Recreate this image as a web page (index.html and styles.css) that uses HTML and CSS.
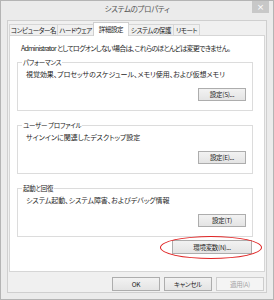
FILE: index.html
```html
<!DOCTYPE html>
<html lang="ja">
<head>
<meta charset="utf-8">
<link rel="stylesheet" href="styles.css">
</head>
<body>
<div class="window">
  <div class="titlebar">
    <span class="title">システムのプロパティ</span>
    <span class="close">×</span>
  </div>
  <div class="client">
    <div class="tabs">
      <span class="tab t1">コンピューター名</span>
      <span class="tab t2">ハードウェア</span>
      <span class="tab t3 active">詳細設定</span>
      <span class="tab t4">システムの保護</span>
      <span class="tab t5">リモート</span>
    </div>
    <div class="panel">
      <p class="info">Administrator としてログオンしない場合は、これらのほとんどは変更できません。</p>
      <fieldset class="group">
        <legend>パフォーマンス</legend>
        <p class="desc">視覚効果、プロセッサのスケジュール、メモリ使用、および仮想メモリ</p>
        <div class="row"><button class="btn">設定(S)...</button></div>
      </fieldset>
      <fieldset class="group">
        <legend>ユーザー プロファイル</legend>
        <p class="desc">サインインに関連したデスクトップ設定</p>
        <div class="row"><button class="btn">設定(E)...</button></div>
      </fieldset>
      <fieldset class="group last">
        <legend>起動と回復</legend>
        <p class="desc">システム起動、システム障害、およびデバッグ情報</p>
        <div class="row"><button class="btn">設定(T)</button></div>
      </fieldset>
      <div class="envrow">
        <div class="envwrap">
          <button class="btn env">環境変数(N)...</button>
          <span class="ring"></span>
        </div>
      </div>
    </div>
    <div class="footer">
      <button class="btn foot">OK</button>
      <button class="btn foot">キャンセル</button>
      <button class="btn foot disabled">適用(A)</button>
    </div>
  </div>
</div>
</body>
</html>
```
FILE: styles.css
```css
* { box-sizing: border-box; }
html, body { margin: 0; padding: 0; }
body {
  width: 274px;
  height: 300px;
  font-family: "Noto Sans CJK JP", "Noto Sans", sans-serif;
  font-feature-settings: "palt";
  color: #1e1e1e;
  background: #ffffff;
}
.window {
  width: 274px;
  height: 300px;
  background: #ebebeb;
  border: 1px solid #b4b4b4;
  display: flex;
  flex-direction: column;
}
.titlebar {
  height: 19px;
  position: relative;
  display: flex;
  justify-content: center;
  align-items: flex-start;
}
.title {
  font-size: 7.5px;
  line-height: 15px;
  color: #555;
  letter-spacing: -0.3px;
}
.close {
  position: absolute;
  right: 4px;
  top: 0;
  width: 17px;
  height: 12px;
  background: #c8c8c8;
  color: #fff;
  font-family: "DejaVu Sans", sans-serif;
  font-size: 9px;
  line-height: 12px;
  text-align: center;
}
.client {
  flex: 1;
  margin: 0 6px 6px 6px;
  background: #f0f0f0;
  border: 1px solid #cfcfcf;
  padding: 1px 1px 0 1px;
  display: flex;
  flex-direction: column;
}
.tabs {
  display: flex;
  align-items: flex-end;
  height: 13px;
  position: relative;
  z-index: 1;
}
.tab {
  height: 11px;
  border: 1px solid #d6d6d6;
  border-bottom: none;
  margin-right: -1px;
  background: #f0f0f0;
  font-size: 6.5px;
  line-height: 10px;
  text-align: center;
  letter-spacing: -0.4px;
  color: #222;
  white-space: nowrap;
}
.t1 { width: 49px; }
.t2 { width: 37px; }
.t3 { width: 36px; }
.t4 { width: 46px; }
.t5 { width: 27px; }
.tab.active {
  height: 14px;
  margin-bottom: -1px;
  background: #fff;
  line-height: 12px;
  border-color: #cfcfcf;
}
.panel {
  height: 237px;
  background: #fff;
  border: 1px solid #d6d6d6;
  padding: 7px 11px 0 7px;
}
.info {
  margin: 0 0 5px 4px;
  font-size: 7px;
  line-height: 10px;
  letter-spacing: -0.75px;
  white-space: nowrap;
}
.group {
  margin: 0 0 10px 0;
  padding: 4px 6px 7px 8px;
  border: 1px solid #dcdcdc;
  height: 53px;
}
.group.last { margin-bottom: 3px; }
.group legend {
  font-size: 6.5px;
  line-height: 8px;
  padding: 0 1px;
  margin-left: -4px;
  letter-spacing: -0.3px;
  color: #222;
}
.desc {
  margin: 0;
  font-size: 7px;
  line-height: 9px;
  letter-spacing: -0.05px;
  white-space: nowrap;
}
.row {
  display: flex;
  justify-content: flex-end;
  margin-top: 9px;
}
.btn {
  font-family: "Noto Sans CJK JP", "Noto Sans", sans-serif;
  font-feature-settings: "palt";
  width: 48px;
  height: 13px;
  padding: 0;
  border: 1px solid #adadad;
  background: linear-gradient(#f2f2f2, #e4e4e4);
  font-size: 6.5px;
  line-height: 11px;
  color: #222;
  letter-spacing: -0.3px;
}
.envrow {
  display: flex;
  justify-content: flex-end;
  margin-top: 2px;
}
.envwrap {
  position: relative;
  margin-right: 1px;
}
.btn.env {
  width: 80px;
  height: 14px;
  display: block;
}
.ring {
  position: absolute;
  left: -12px;
  right: -10px;
  top: -4px;
  bottom: -5px;
  border: 1px solid #e02424;
  border-radius: 50%;
}
.footer {
  display: flex;
  justify-content: flex-end;
  gap: 4px;
  padding: 5px 1px 0 0;
}
.btn.foot {
  width: 48px;
  height: 14px;
  line-height: 12px;
}
.btn.disabled {
  color: #a3a3a3;
  border-color: #cdcdcd;
  background: #f4f4f4;
}
```
